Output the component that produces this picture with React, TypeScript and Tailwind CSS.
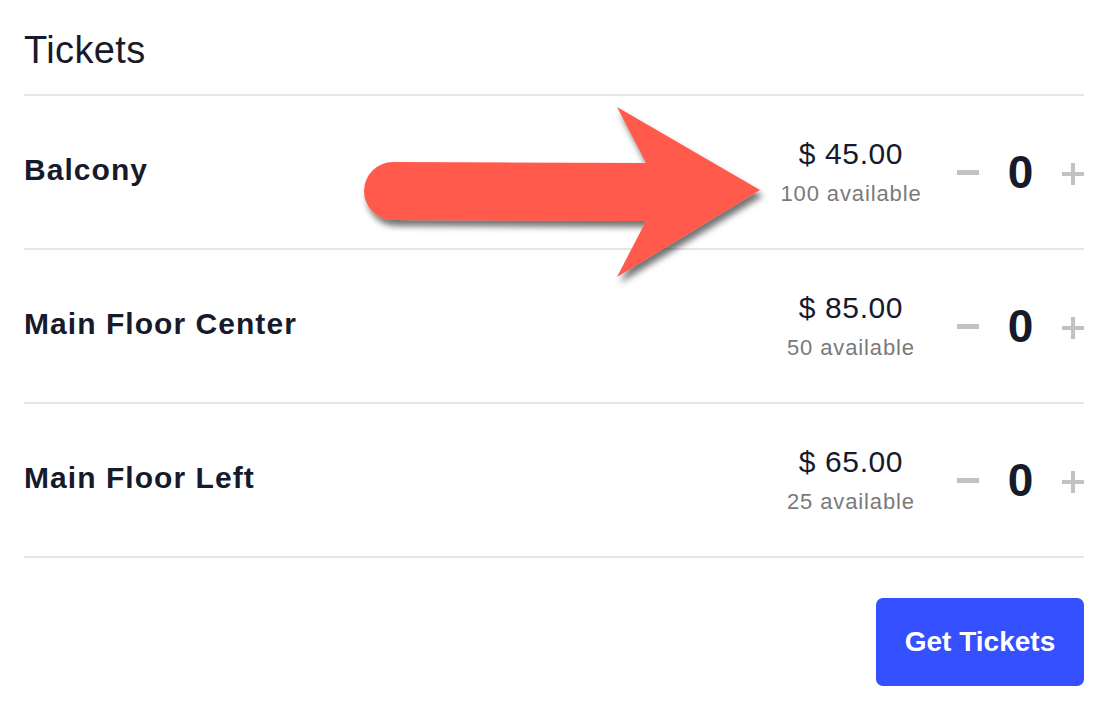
import React, { useState } from "react";

type Ticket = { id: number; name: string; price: number; available: number };

const tickets: Ticket[] = [
  { id: 1, name: "Balcony", price: 45, available: 100 },
  { id: 2, name: "Main Floor Center", price: 85, available: 50 },
  { id: 3, name: "Main Floor Left", price: 65, available: 25 },
];

function MinusIcon() {
  return <div className="w-[22px] h-[5px] bg-[#c2c2c2]" />;
}

function PlusIcon() {
  return (
    <div className="relative w-[22px] h-[22px]">
      <div className="absolute left-0 top-[9px] w-[22px] h-[4px] bg-[#c2c2c2]" />
      <div className="absolute top-0 left-[9px] w-[4px] h-[22px] bg-[#c2c2c2]" />
    </div>
  );
}

function TicketRow({ t, qty, onChange }: { t: Ticket; qty: number; onChange: (n: number) => void }) {
  return (
    <div className="h-[154px] border-b-2 border-[#e6e6e6] flex items-center">
      <div className="flex-1 text-[30px] leading-[36px] font-bold tracking-[0.035em] text-[#161a2b] pb-1">{t.name}</div>
      <div className="w-[160px] text-center pb-[2px]">
        <div className="text-[30px] leading-[36px] tracking-[0.02em] text-[#161a2b]">$ {t.price.toFixed(2)}</div>
        <div className="mt-[9px] text-[22px] leading-[26px] tracking-[0.04em] text-[#7a7a7a]">{t.available} available</div>
      </div>
      <div className="ml-[26px] flex items-center">
        <button className="w-[22px] h-[22px] flex items-center justify-center" onClick={() => onChange(Math.max(0, qty - 1))}>
          <MinusIcon />
        </button>
        <div className="w-[83px] text-center text-[46px] leading-[52px] font-bold text-[#161a2b]">{qty}</div>
        <button className="w-[22px] h-[22px] mt-[4px]" onClick={() => onChange(qty + 1)}>
          <PlusIcon />
        </button>
      </div>
    </div>
  );
}

export default function App() {
  const [qty, setQty] = useState<Record<number, number>>({ 1: 0, 2: 0, 3: 0 });

  return (
    <div className="relative w-[1114px] h-[714px] bg-white font-['Liberation_Sans',Arial,sans-serif] overflow-hidden">
      <div className="pl-6 pr-[30px] flex flex-col">
        <div className="pt-[31px] pb-[25px] border-b-2 border-[#e6e6e6] text-[38px] leading-[38px] tracking-[0.01em] text-[#161a2b]">
          Tickets
        </div>
        {tickets.map((t) => (
          <TicketRow key={t.id} t={t} qty={qty[t.id]} onChange={(n) => setQty({ ...qty, [t.id]: n })} />
        ))}
        <button className="self-end mt-[40px] w-[208px] h-[88px] rounded-[7px] bg-[#3450ff] text-white text-[28px] font-bold">
          Get Tickets
        </button>
      </div>

      {/* callout arrow pointing at the first price */}
      <svg className="absolute inset-0 pointer-events-none" width="1114" height="714" viewBox="0 0 1114 714">
        <defs>
          <filter id="arrowShadow" x="-10%" y="-20%" width="130%" height="150%">
            <feDropShadow dx="3" dy="6" stdDeviation="3" floodColor="#000" floodOpacity="0.55" />
          </filter>
        </defs>
        <path
          d="M393 162 L646 163 L617 107 L760 190 L617 277 L646 221 L393 220 A29 29 0 0 1 393 162 Z"
          fill="#ff5a4b"
          filter="url(#arrowShadow)"
        />
      </svg>
    </div>
  );
}
